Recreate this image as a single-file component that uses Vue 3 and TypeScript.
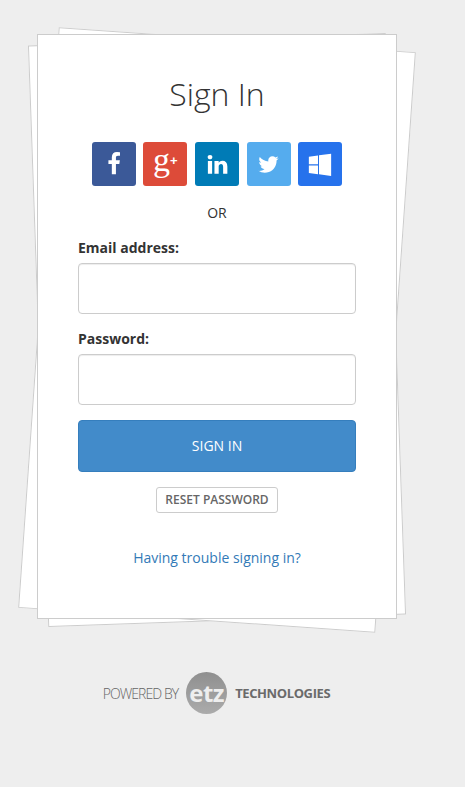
<script setup lang="ts">
import { ref } from 'vue'

interface Social {
  name: string
  color: string
  viewBox: string
  path: string
  size: number
}

const email = ref('')
const password = ref('')

const socials: Social[] = [
  {
    name: 'facebook',
    color: '#3b5998',
    viewBox: '0 0 1792 1792',
    size: 24,
    path: 'M1343 12v264h-157q-86 0-116 36t-30 108v189h293l-39 296h-254v759h-306v-759h-255v-296h255v-218q0-186 104-288.5t277-102.5q147 0 228 12z',
  },
  { name: 'google', color: '#dd4b39', viewBox: '', size: 0, path: '' },
  {
    name: 'linkedin',
    color: '#007bb6',
    viewBox: '0 0 1792 1792',
    size: 23,
    path: 'M477 625v991h-330v-991h330zm21-306q1 73-50.5 122t-135.5 49h-2q-82 0-132-49t-50-122q0-74 51.5-122.5t134.5-48.5 133 48.5 51 122.5zm1166 729v568h-329v-530q0-105-40.5-164.5t-126.5-59.5q-63 0-105.5 34.5t-63.5 85.5q-11 30-11 81v553h-329q2-399 2-647t-1-296l-1-48h329v144h-2q20-32 41-56t56.5-52 87-43.5 114.5-15.5q171 0 275 113.5t104 332.5z',
  },
  {
    name: 'twitter',
    color: '#55acee',
    viewBox: '0 0 1792 1792',
    size: 23,
    path: 'M1684 408q-67 98-162 167 1 14 1 42 0 130-38 259.5t-115.5 248.5-184.5 210.5-258 146-323 54.5q-271 0-496-145 35 4 78 4 225 0 401-138-105-2-188-64.5t-114-159.5q33 5 61 5 43 0 85-11-112-23-185.5-111.5t-73.5-205.5v-4q68 38 146 41-66-44-105-115t-39-154q0-88 44-163 121 149 294.5 238.5t371.5 99.5q-8-38-8-74 0-134 94.5-228.5t228.5-94.5q140 0 236 102 109-21 205-78-37 115-142 178 92-10 184-50z',
  },
  {
    name: 'windows',
    color: '#2672ec',
    viewBox: '0 0 1792 1792',
    size: 24,
    path: 'M746 1006v651l-682-94v-557h682zm0-744v658h-682v-563zm982 744v786l-907-125v-661h907zm0-883v883h-907v-758z',
  },
]
</script>

<template>
  <div class="page">
    <div class="stack">
      <div class="sheet sheet_left"></div>
      <div class="sheet sheet_right"></div>
      <div class="card">
        <h1 class="title">Sign In</h1>

        <div class="socials">
          <a v-for="s in socials" :key="s.name" class="social" :style="{ background: s.color }" href="#">
            <span v-if="s.name === 'google'" class="gplus">g<i>+</i></span>
            <svg v-else :viewBox="s.viewBox" :width="s.size" :height="s.size" fill="#fff">
              <path :d="s.path" />
            </svg>
          </a>
        </div>

        <div class="or">OR</div>

        <label class="label" for="email">Email address:</label>
        <input id="email" v-model="email" class="input" type="text" />

        <label class="label" for="password">Password:</label>
        <input id="password" v-model="password" class="input" type="password" />

        <button class="submit" type="button">SIGN IN</button>

        <div class="reset_row">
          <button class="reset" type="button">RESET PASSWORD</button>
        </div>

        <a class="trouble" href="#">Having trouble signing in?</a>
      </div>
    </div>

    <div class="powered">
      <span class="powered_by">POWERED BY</span>
      <span class="etz">etz</span>
      <span class="tech">TECHNOLOGIES</span>
    </div>
  </div>
</template>

<style>
html,
body {
  background: #eeeeee;
}
</style>

<style scoped>
.page {
  width: 360px;
  margin-left: 37px;
  padding: 34px 0 73px;
  font-family: "Open Sans", "Liberation Sans", sans-serif;
  color: #333;
}

.stack {
  position: relative;
}

/* loose paper sheets behind the card */
.sheet {
  position: absolute;
  top: 5px;
  bottom: -2px;
  left: 1px;
  right: 1px;
  background: #fff;
  border: 1px solid #ccc;
  box-sizing: border-box;
}

.sheet_left {
  transform: rotate(-2deg);
}

.sheet_right {
  transform: rotate(4deg);
}

.card {
  position: relative;
  background: #fff;
  border: 1px solid #ccc;
  padding: 40px 40px 50px;
}

.title {
  margin: 0;
  font-size: 32px;
  font-weight: 300;
  line-height: 38px;
  text-align: center;
}

.socials {
  display: flex;
  justify-content: center;
  gap: 7.6px;
  margin-top: 29px;
}

.social {
  display: flex;
  align-items: center;
  justify-content: center;
  width: 44px;
  height: 44px;
  border-radius: 3px;
  text-decoration: none;
}

.gplus {
  font-family: "Liberation Serif", serif;
  font-size: 34px;
  line-height: 40px;
  color: #fff;
  margin-top: -7px;
}

.gplus i {
  font-family: "Liberation Sans", sans-serif;
  font-style: normal;
  font-weight: 700;
  font-size: 13px;
  vertical-align: 6px;
}

.or {
  margin-top: 17px;
  font-size: 14px;
  line-height: 20px;
  text-align: center;
}

.label {
  display: block;
  margin-top: 15px;
  margin-bottom: 5px;
  font-size: 14px;
  font-weight: 700;
  line-height: 20px;
}

.input {
  display: block;
  box-sizing: border-box;
  width: 100%;
  height: 51px;
  padding: 6px 12px;
  background: #fff;
  border: 1px solid #ccc;
  border-radius: 4px;
  box-shadow: inset 0 1px 1px rgba(0, 0, 0, 0.075);
}

.submit {
  display: block;
  box-sizing: border-box;
  width: 100%;
  height: 52px;
  margin-top: 15px;
  padding: 0 0 2px;
  background: #428bca;
  border: 1px solid #357ebd;
  border-radius: 4px;
  color: #fff;
  font-family: inherit;
  font-size: 14px;
}

.reset_row {
  display: flex;
  justify-content: center;
  margin-top: 15px;
}

.reset {
  box-sizing: border-box;
  width: 122px;
  height: 26px;
  padding: 0 0 2px;
  background: #fff;
  border: 1px solid #ccc;
  border-radius: 3px;
  color: #666;
  font-family: inherit;
  font-size: 12px;
  font-weight: 600;
}

.trouble {
  display: block;
  margin-top: 35px;
  color: #337ab7;
  font-size: 14px;
  line-height: 20px;
  text-align: center;
  text-decoration: none;
}

.powered {
  display: flex;
  align-items: center;
  justify-content: center;
  gap: 8px;
  margin-top: 53px;
  margin-left: -1px;
}

.powered_by {
  color: #666;
  font-size: 14px;
  font-weight: 300;
  letter-spacing: -0.95px;
}

.etz {
  display: flex;
  align-items: center;
  justify-content: center;
  width: 41px;
  height: 42px;
  border-radius: 50%;
  background: linear-gradient(#8f8f8f, #ababab);
  color: #eee;
  font-size: 24px;
  font-weight: 700;
  letter-spacing: -0.5px;
  line-height: 42px;
}

.tech {
  color: #6a6a6a;
  font-size: 13px;
  font-weight: 700;
  letter-spacing: -0.4px;
}
</style>
